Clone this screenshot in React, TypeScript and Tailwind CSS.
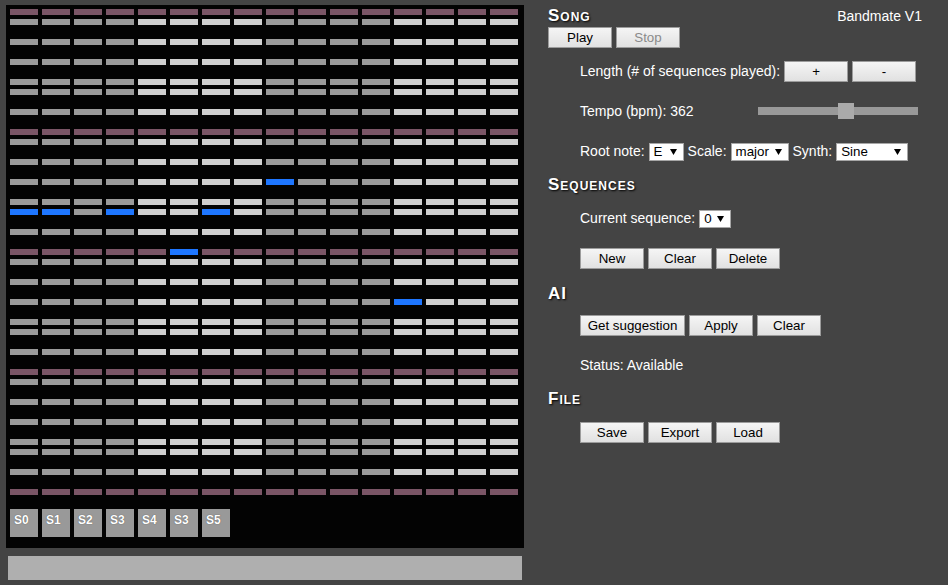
const ROWS = 49;
const COLS = 16;

// pitch classes shown, counting down from the root (E major)
const IN_SCALE = [true, true, false, true, false, true, false, true, true, false, true, false];

const ACTIVE = new Set(['17-8', '20-0', '20-1', '20-3', '20-6', '24-5', '29-12']);

function cellClass(r: number, c: number) {
  if (ACTIVE.has(`${r}-${c}`)) return 'bg-[#1e76ff]';
  if (r % 12 === 0) return 'bg-[#7a5566]';
  return Math.floor(c / 4) % 2 === 0 ? 'bg-[#9a9a9a]' : 'bg-[#cfcfcf]';
}

function Grid() {
  const rows = Array.from({ length: ROWS }, (_, r) => r);
  const cols = Array.from({ length: COLS }, (_, c) => c);
  return (
    <div className="ml-[6px] mt-[5px] w-[518px] h-[543px] bg-[#030303] p-[4px]">
      {rows.map((r) => (
        <div key={r} className="h-[10px] flex gap-[4px]">
          {IN_SCALE[r % 12] &&
            cols.map((c) => <div key={c} className={`w-[28px] h-[6px] ${cellClass(r, c)}`} />)}
        </div>
      ))}
      <div className="mt-[10px] flex gap-[4px]">
        {['S0', 'S1', 'S2', 'S3', 'S4', 'S3', 'S5'].map((s, i) => (
          <div
            key={i}
            className="w-[28px] h-[28px] bg-[#999] text-white text-[12px] font-bold leading-[14px] pt-[4px] pl-[4px] [text-shadow:0_0_1px_#444]"
          >
            {s}
          </div>
        ))}
      </div>
    </div>
  );
}

function Btn({ children, w = 'w-[64px]', disabled = false }: { children: React.ReactNode; w?: string; disabled?: boolean }) {
  return (
    <button
      disabled={disabled}
      className={`${w} h-[21px] border border-[#9c9c9c] bg-[linear-gradient(#f5f5f5,#e1e1e1)] text-[13.33px] leading-[19px] ${
        disabled ? 'text-[#8a8a8a]' : 'text-black'
      }`}
    >
      {children}
    </button>
  );
}

function Select({ value, w }: { value: string; w: string }) {
  return (
    <div className={`${w} h-[18px] bg-white border border-[#a6a6a6] flex items-center justify-between pl-[4px] pr-[6px] text-black text-[13.33px]`}>
      <span>{value}</span>
      <svg width="7" height="6" viewBox="0 0 7 6">
        <path d="M0 0 H7 L3.5 6 Z" fill="#000" />
      </svg>
    </div>
  );
}

function Heading({ children }: { children: React.ReactNode }) {
  return (
    <div className="h-[20px] leading-[20px] text-[17px] font-bold [font-variant:small-caps] tracking-[1px] text-white [text-shadow:1px_1px_2px_#000]">
      {children}
    </div>
  );
}

export default function App() {
  return (
    <div className="min-h-screen bg-[#444] flex font-['Liberation_Sans',Arial,sans-serif] text-white text-[14px]">
      <div className="w-[524px] shrink-0">
        <Grid />
        <div className="ml-[8px] mt-[8px] w-[514px] h-[24px] bg-[#afafaf]" />
      </div>

      <div className="pl-[24px] w-[400px]">
        <div className="mt-[6px] w-[374px] flex justify-between items-start">
          <Heading>Song</Heading>
          <span className="leading-[20px]">Bandmate V1</span>
        </div>
        <div className="mt-[1px] flex gap-[4px]">
          <Btn>Play</Btn>
          <Btn disabled>Stop</Btn>
        </div>

        <div className="pl-[32px]">
          <div className="mt-[13px] flex items-center gap-[4px] h-[21px]">
            <span>Length (# of sequences played):</span>
            <Btn>+</Btn>
            <Btn>-</Btn>
          </div>

          <div className="mt-[21px] flex items-center h-[16px]">
            <span className="w-[178px]">Tempo (bpm): 362</span>
            <div className="relative w-[160px] h-[16px] flex items-center">
              <div className="w-full h-[8px] bg-[#999]" />
              <div className="absolute left-[80px] top-0 w-[16px] h-[16px] bg-[#aaa]" />
            </div>
          </div>

          <div className="mt-[22px] flex items-center gap-[4px]">
            <span>Root note:</span>
            <Select value="E" w="w-[35px]" />
            <span>Scale:</span>
            <Select value="major" w="w-[58px]" />
            <span>Synth:</span>
            <Select value="Sine" w="w-[72px]" />
          </div>
        </div>

        <div className="mt-[13px]">
          <Heading>Sequences</Heading>
        </div>
        <div className="pl-[32px]">
          <div className="mt-[13px] flex items-center gap-[4px]">
            <span>Current sequence:</span>
            <Select value="0" w="w-[32px]" />
          </div>
          <div className="mt-[19px] flex gap-[4px]">
            <Btn>New</Btn>
            <Btn>Clear</Btn>
            <Btn>Delete</Btn>
          </div>
        </div>

        <div className="mt-[15px]">
          <Heading>AI</Heading>
        </div>
        <div className="pl-[32px]">
          <div className="mt-[11px] flex gap-[4px]">
            <Btn w="w-[105px]">Get suggestion</Btn>
            <Btn>Apply</Btn>
            <Btn>Clear</Btn>
          </div>
          <div className="mt-[21px] leading-[16px]">Status: Available</div>
        </div>

        <div className="mt-[16px]">
          <Heading>File</Heading>
        </div>
        <div className="pl-[32px]">
          <div className="mt-[13px] flex gap-[4px]">
            <Btn>Save</Btn>
            <Btn>Export</Btn>
            <Btn>Load</Btn>
          </div>
        </div>
      </div>
    </div>
  );
}
